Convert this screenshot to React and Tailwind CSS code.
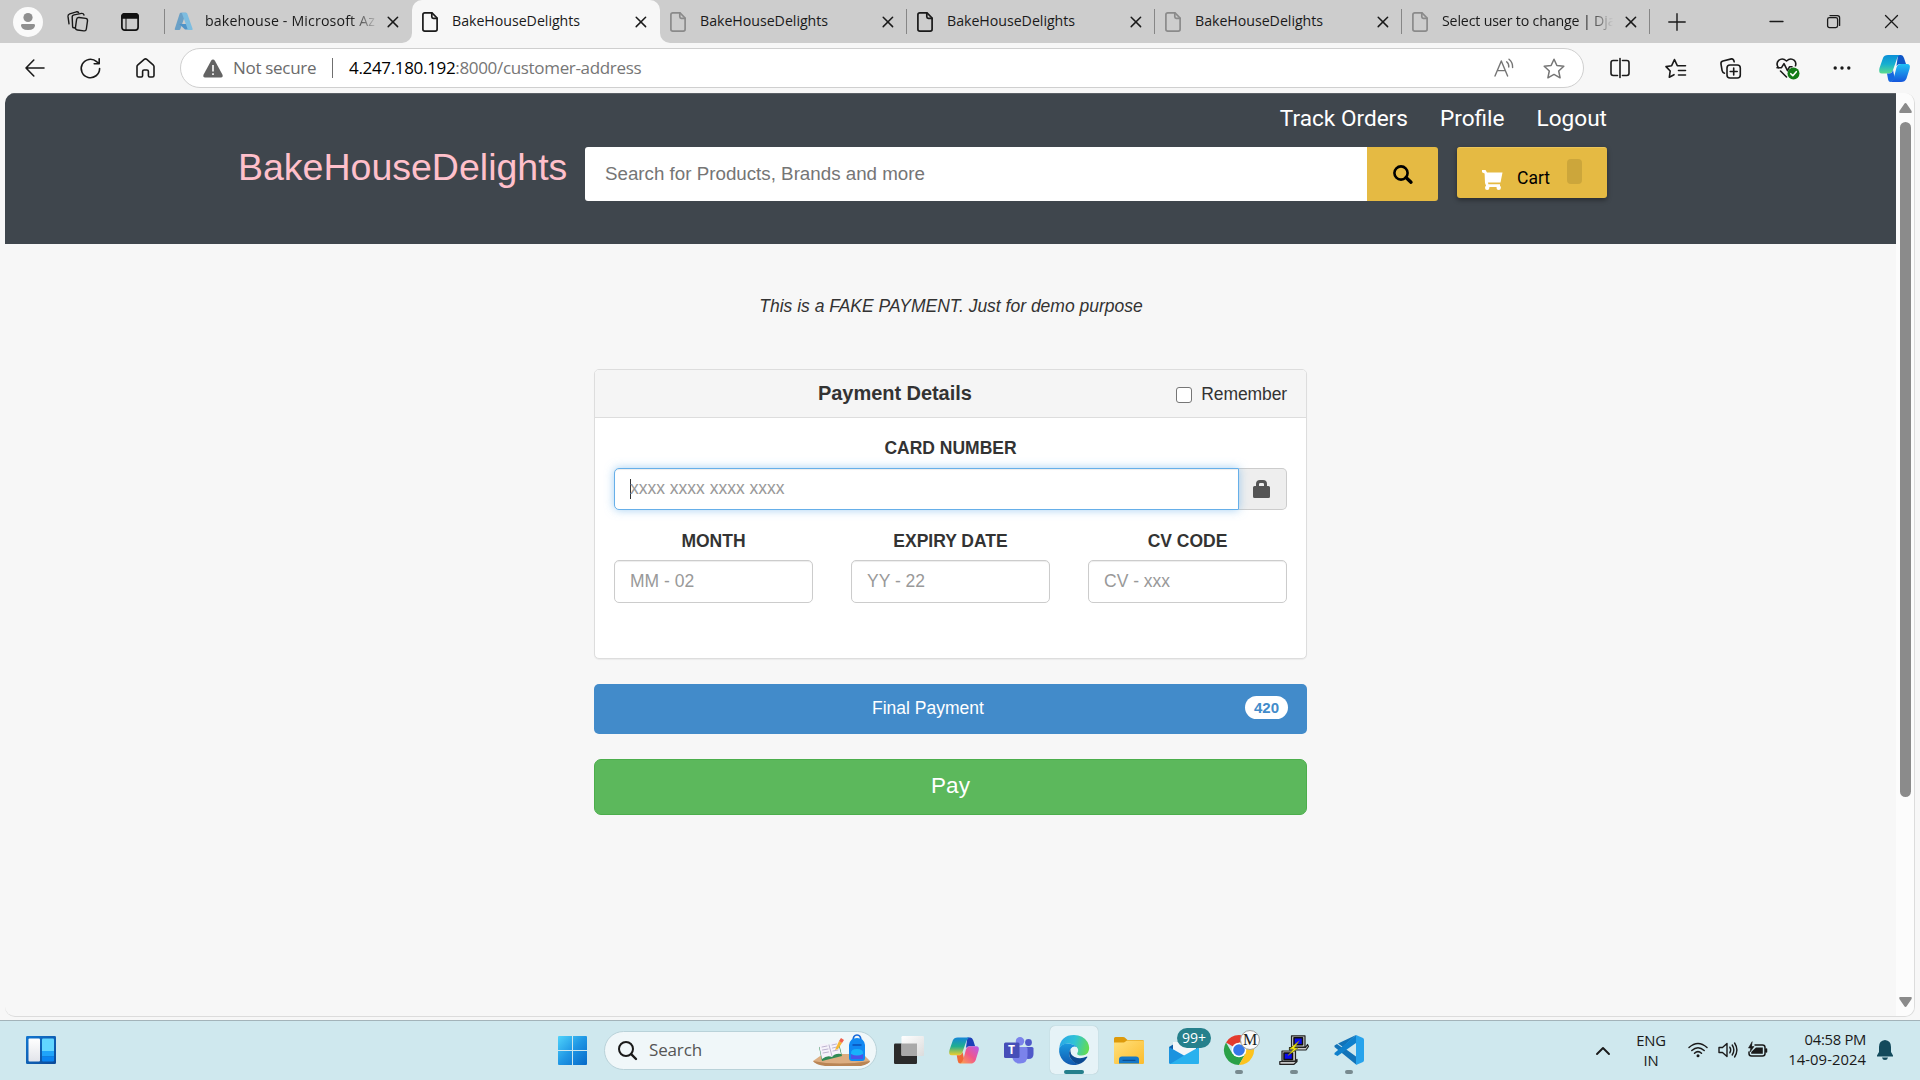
import React from "react";

const line = { fill: "none", stroke: "currentColor", strokeLinecap: "round", strokeLinejoin: "round" };

function Svg({ w, h, vb, className = "", children, sw = 1.5, ...rest }) {
  return (
    <svg width={w} height={h} viewBox={vb || `0 0 ${w} ${h}`} className={`block shrink-0 overflow-visible ${className}`} {...line} strokeWidth={sw} {...rest}>
      {children}
    </svg>
  );
}

const PageIcon = ({ className }) => (
  <Svg w={16} h={20} sw={1.7} className={className}>
    <path d="M2.8 .9H10L15.1 6V17.2Q15.1 19.1 13.2 19.1H2.8Q.9 19.1 .9 17.2V2.8Q.9 .9 2.8 .9Z" />
    <path d="M9.8 1V4.8Q9.8 6.3 11.3 6.3H15" />
  </Svg>
);

const CloseIcon = () => (
  <Svg w={12} h={12} sw={1.5} className="text-[#1a1a1a]"><path d="M1.2 1.2 10.6 10.6M10.6 1.2 1.2 10.6" /></Svg>
);

const AzureIcon = () => (
  <Svg w={20} h={19} stroke="none">
    <path d="M6.6 .8H12L6.3 17.2Q6 18 5.2 18H1.6Q.4 18 .8 16.8L5.7 1.5Q5.9 .8 6.6 .8Z" fill="#6aa0c6" />
    <path d="M5.2 12H14L15 17.5H11Z" fill="#4f93c8" />
    <path d="M7 .8H12.2Q13 .8 13.2 1.5L18.6 16.8Q19 18 17.8 18H12.6Q13.8 17.8 13.4 16.6L8 1.5Q7.7 .8 7 .8Z" fill="#7dbde0" />
  </Svg>
);

function Tab({ icon, title, width, fade, sep = true }) {
  return (
    <div className={`flex h-[43px] shrink-0 items-center ${width}`}>
      <div className="w-[10px] shrink-0" />
      {icon}
      <div className={`ml-[14px] w-[172px] whitespace-nowrap pb-[2px] text-[14.2px] leading-[22px] text-[#1a1a1a] ${fade ? "tracking-[-0.16px]" : "tracking-[-0.03px]"}`}>
        <span className={fade ? "bg-linear-to-r from-[#1a1a1a] from-83% to-[#cdcdcd] to-99% bg-clip-text text-transparent" : ""}>{title}</span>
      </div>
      <div className="ml-auto mr-[12px]"><CloseIcon /></div>
      {sep ? <div className="h-[25px] w-px bg-[#868686]" /> : <div className="w-px" />}
    </div>
  );
}

function TabStrip() {
  return (
    <div className="flex h-[43px] bg-[#cdcdcd]">
      <div className="h-[43px] w-[412px] shrink-0 bg-[#f7f7f7]">
        <div className="flex h-[43px] items-center rounded-br-[10px] bg-[#cdcdcd]">
          <Svg w={30} h={30} className="ml-[13px]" stroke="none">
            <circle cx="15" cy="15" r="15" fill="#fafafa" />
            <circle cx="15" cy="10.5" r="4.6" fill="#8f8f8f" />
            <path d="M8 18.3Q8 17 9.4 17H20.6Q22 17 22 18.3Q22 23 15 23Q8 23 8 18.3Z" fill="#8f8f8f" />
          </Svg>
          <Svg w={22} h={21} sw={1.4} className="ml-[24px] text-[#1a1a1a]">
            <rect x="9" y="6.8" width="11" height="12.6" rx="2.2" transform="rotate(8 14 13)" />
            <path d="M5.6 15.5 5.2 6.5Q5 4.3 7.1 3.9L14.6 2.4Q16.4 2.2 17 4" />
            <path d="M2 12.8 1 5.4Q.8 3.4 2.7 2.8L9.4 .8Q11 .5 11.6 1.6M5.8 16.5 8 17" />
          </Svg>
          <Svg w={18} h={18} sw={1.7} className="ml-[32px] text-[#111]">
            <rect x=".9" y=".9" width="16.2" height="16.2" rx="2.8" />
            <path d="M1 4.8V3.6Q1 .9 3.6 .9H14.4Q17 .9 17 3.6V4.8Z" fill="currentColor" />
            <path d="M5 5V17" strokeWidth="1" />
          </Svg>
          <div className="ml-[25px] h-[25px] w-px bg-[#868686]" />
          <div className="ml-[9px]"><AzureIcon /></div>
          <div className="ml-[11px] w-[172px] whitespace-nowrap pb-[2px] text-[14.2px] leading-[22px] tracking-[0.15px]">
            <span className="bg-linear-to-r from-[#1a1a1a] from-85% to-[#b5b5b5] bg-clip-text text-transparent">bakehouse - Microsoft Az</span>
          </div>
          <div className="ml-[10px]"><CloseIcon /></div>
        </div>
      </div>
      <div className="h-[43px] w-[248px] shrink-0 rounded-t-[10px] bg-[#f7f7f7]">
        <Tab width="w-[248px]" icon={<PageIcon className="text-[#1a1a1a]" />} title="BakeHouseDelights" sep={false} />
      </div>
      <div className="h-[43px] flex-1 bg-[#f7f7f7]">
        <div className="flex h-[43px] items-center rounded-bl-[10px] bg-[#cdcdcd]">
          <Tab width="w-[247px]" icon={<PageIcon className="text-[#8a8a8a]" />} title="BakeHouseDelights" />
          <Tab width="w-[248px]" icon={<PageIcon className="text-[#1a1a1a]" />} title="BakeHouseDelights" />
          <Tab width="w-[247px]" icon={<PageIcon className="text-[#8a8a8a]" />} title="BakeHouseDelights" />
          <Tab width="w-[248px]" icon={<PageIcon className="text-[#8a8a8a]" />} title="Select user to change | Dja" fade />
          <Svg w={18} h={18} sw={1.4} className="ml-[18px] text-[#1a1a1a]"><path d="M9 .8V17.2M.8 9H17.2" /></Svg>
          <Svg w={13} h={13} sw={1.3} className="ml-[84px] text-[#1a1a1a]"><path d="M0 6.5H13" /></Svg>
          <Svg w={13} h={13} sw={1.3} className="ml-[44px] text-[#1a1a1a]">
            <rect x=".6" y="2.6" width="10" height="10" rx="1.8" />
            <path d="M3 .6H10.4Q12.6 .6 12.6 2.8V10.4" />
          </Svg>
          <Svg w={13} h={13} sw={1.3} className="ml-[45px] text-[#1a1a1a]"><path d="M.5 .5 12.5 12.5M12.5 .5 .5 12.5" /></Svg>
        </div>
      </div>
    </div>
  );
}

const CopilotSmall = () => (
  <Svg w={31} h={27} vb="0 0 31 27" stroke="none">
    <defs>
      <linearGradient id="cpa" x1="0" y1="0" x2="0" y2="1"><stop offset="0" stopColor="#0a8fd8" /><stop offset=".5" stopColor="#18b0cf" /><stop offset="1" stopColor="#5ddc8c" /></linearGradient>
      <linearGradient id="cpb" x1="0" y1="0" x2="0" y2="1"><stop offset="0" stopColor="#20c0f5" /><stop offset="1" stopColor="#1556dc" /></linearGradient>
    </defs>
    <path d="M19 0H22Q24 0 25 3L27 9H21Q19 9 17.500 11Z" fill="#1057c8" />
    <path d="M9 0H21Q18.500 1 17.500 5L14 15Q13 18.500 9 18.500H3Q-1 18.500 .5 13L4 3Q5 0 9 0Z" fill="url(#cpa)" />
    <path d="M8 18.500H10Q13 18.500 14 15L15.500 22Q15 26 11.500 27Q9.500 27 9 24Z" fill="#1668e0" />
    <path d="M22 27H11.500Q14 26 15 22L17.500 12.500Q18.500 9 22 9H28Q32 9 30.500 14L27.500 23.500Q26 27 22 27Z" fill="url(#cpb)" />
  </Svg>
);

function Toolbar() {
  return (
    <div className="flex h-[50px] items-center bg-[#f7f7f7] text-[#1a1a1a]">
      <Svg w={20} h={18} sw={1.6} className="ml-[25px]"><path d="M19 9H1M8.800 1 1 9l7.800 8" /></Svg>
      <Svg w={21} h={21} sw={1.600} className="ml-[35px]"><path d="M19.600 10.500A9.200 9.200 0 1 1 16.600 3.700L19 5.600M19.200 .8V5.800H14.200" /></Svg>
      <Svg w={19} h={20} sw={1.600} className="ml-[35px]">
        <path d="M1 8.600Q1 7.600 1.900 6.800L8.200 1.400Q9.500 .4 10.800 1.400L17.100 6.800Q18 7.600 18 8.600V17.400Q18 19 16.400 19H13.600Q12.400 19 12.400 17.800V13.500Q12.400 12 10.900 12H8.100Q6.600 12 6.600 13.500V17.800Q6.600 19 5.400 19H2.600Q1 19 1 17.400Z" />
      </Svg>
      <div className="ml-[25px] flex h-[40px] w-[1404px] items-center rounded-full border border-[#cfcfcf] bg-white">
        <Svg w={20} h={19} className="ml-[22px]" stroke="none">
          <path d="M10 .5Q11.200 .5 11.900 1.700L19.500 15.800Q20.300 18.300 18 18.500H2Q-.3 18.300 .5 15.800L8.100 1.700Q8.800 .5 10 .5Z" fill="#636363" />
          <path d="M9.200 6H10.800V12.500H9.200ZM9.200 14.300H10.800V16H9.200Z" fill="#fff" />
        </Svg>
        <div className="ml-[10px] w-[99px] whitespace-nowrap text-[17px] tracking-[-0.3px] text-[#6b6b6b]">Not secure</div>
        <div className="h-[20px] w-px bg-[#6f6f6f]" />
        <div className="ml-[16px] whitespace-nowrap text-[17px] tracking-[-0.33px] text-[#767676]"><span className="text-black">4.247.180.192</span>:8000/customer-address</div>
        <div className="ml-auto mr-[18px] flex items-center gap-[28px] text-[#757575]">
          <Svg w={21} h={20} sw={1.400}>
            <path d="M1 18 7.300 3 13.600 18M3.400 12.600H11.200M12.600 3.800Q15 5.600 14.800 9M15 1.200Q18.800 4.300 18.600 9.500" />
          </Svg>
          <Svg w={22} h={21} sw={1.500}><path d="M11 1.200 13.900 7.500 20.800 8.300 15.700 13 17.100 19.800 11 16.400 4.900 19.800 6.300 13 1.200 8.300 8.100 7.500Z" /></Svg>
        </div>
      </div>
      <Svg w={20} h={20} sw={1.600} className="ml-[26px]">
        <path d="M7.500 2.500H3.200Q1 2.500 1 4.700V15.300Q1 17.500 3.200 17.500H7.500M12.500 2.500H16.800Q19 2.500 19 4.700V15.300Q19 17.500 16.800 17.500H12.500M10 .6V19.400" />
      </Svg>
      <Svg w={21} h={21} sw={1.600} className="ml-[35px]">
        <path d="M15.500 7.700H12.300L9.500 1.600 6.700 7.700 1 8.600 5.200 13 4.300 19.300 9 16.700M14.500 7.700H20.500M13.500 12.500H20.500M13.500 17H20.500" />
      </Svg>
      <Svg w={21} h={21} sw={1.600} className="ml-[34px]">
        <rect x="7" y="7" width="13.300" height="13" rx="3" />
        <path d="M13.700 10V17M10.200 13.500H17.200M4.500 15.200Q2.600 14.800 2.100 12.600L1 6Q.6 3.600 3 3L11.400 .9Q13.600 .6 14.200 3.800" />
      </Svg>
      <Svg w={24} h={21} sw={1.600} className="ml-[35px]">
        <path d="M2.600 10Q-.6 5.500 2.700 2.400Q6.500-.6 10.500 3Q14.500-.6 18.300 2.400Q20.500 4.600 19.500 7.800M4.500 13 10.500 19M1 9.700H5.500L8 5.700 11.500 12.700 13.500 8.800H16" />
        <circle cx="17.500" cy="15.500" r="6" fill="#137c17" stroke="none" />
        <path d="M14.800 15.700 16.800 17.700 20.300 13.700" stroke="#fff" />
      </Svg>
      <Svg w={18} h={6} className="ml-[33px]" stroke="none" fill="#1a1a1a"><circle cx="2.200" cy="3" r="1.700" /><circle cx="9" cy="3" r="1.700" /><circle cx="15.800" cy="3" r="1.700" /></Svg>
      <div className="ml-[28px]"><CopilotSmall /></div>
    </div>
  );
}

function SiteHeader() {
  return (
    <header className="h-[151px] border-t border-[#5b6066] bg-[#3f464d]">
      <div className="ml-[233px] flex w-[1369px] flex-col">
        <nav className="mt-[9px] flex h-[32px] items-center justify-end gap-[32px] font-[Roboto] text-[22.6px] leading-[32px] text-white">
          <span>Track Orders</span><span>Profile</span><span>Logout</span>
        </nav>
        <div className="mt-[12px] flex items-start">
          <div className="-mt-[3px] w-[347px] whitespace-nowrap text-[37.5px] leading-[46px] text-[#ffc0cb]">BakeHouseDelights</div>
          <div className="flex h-[54px] w-[782px] items-center rounded-l-[3px] bg-white pl-[20px] text-[18.75px] text-[#757575]">Search for Products, Brands and more</div>
          <div className="flex h-[54px] w-[71px] items-center justify-center rounded-r-[3px] bg-[#e5ba43]">
            <Svg w={20} h={19} sw={2.600} className="text-black"><circle cx="8" cy="8" r="6.600" /><path d="M13 12.600 18 17.200" strokeWidth="3.400" /></Svg>
          </div>
          <div className="ml-[19px] flex h-[51px] w-[150px] rounded-[3px] border-t border-[#edc65a] bg-[#e5ba43] shadow-[0_2px_5px_rgba(0,0,0,0.4)]">
            <Svg w={21} h={20} className="ml-[25px] mt-[22px]" stroke="none" fill="#fff">
              <path d="M0 0H3.500L5 2.500H20.500L18.500 12.500H6L6.400 14.200H18V17H4.500L3 13 2.600 3.600 0 2.200Z" />
              <circle cx="5.200" cy="17.700" r="2.200" /><circle cx="16.700" cy="17.700" r="2.200" />
            </Svg>
            <div className="ml-[14px] mt-[19px] w-[50px] font-[Roboto] text-[17.5px] leading-[22px] text-black">Cart</div>
            <div className="mt-[11px] h-[25px] w-[15px] rounded-[4px] bg-[#cca63b]" />
          </div>
        </div>
      </div>
    </header>
  );
}

function Field({ label, hint }) {
  return (
    <div className="w-[199px]">
      <div className="text-center font-bold leading-[25px]">{label}</div>
      <div className="mt-[6px] flex h-[43px] items-center rounded-[5px] border border-[#ccc] bg-white pl-[15px] pb-[1px] text-[#999] shadow-[inset_0_1px_1px_rgba(0,0,0,0.075)]">{hint}</div>
    </div>
  );
}

function Payment() {
  return (
    <main className="ml-[589px] w-[713px] text-[17.5px] leading-[25px] text-[#333]">
      <p className="mt-[50px] pl-px text-center italic">This is a FAKE PAYMENT. Just for demo purpose</p>
      <section className="mt-[50px] h-[290px] rounded-[5px] border border-[#ddd] bg-white shadow-[0_1px_1px_rgba(0,0,0,0.05)]">
        <div className="flex h-[48px] items-center rounded-t-[4px] border-b border-[#ddd] bg-[#f5f5f5] pr-[19px]">
          <h3 className="ml-[223px] pb-[2px] text-[20px] font-bold leading-[22px] tracking-[-0.05px]">Payment Details</h3>
          <div className="ml-auto mr-[9px] mt-[3px] size-[16px] rounded-[3px] border border-[#767676] bg-white" />
          <span className="pt-[2px] tracking-[-0.1px]">Remember</span>
        </div>
        <div className="px-[19px] pt-[18px]">
          <div className="text-center font-bold leading-[25px]">CARD NUMBER</div>
          <div className="mt-[7px] flex">
            <div className="z-10 flex h-[42px] w-[625px] items-center rounded-l-[5px] border border-[#66afe9] bg-white pl-[15px] text-[#999] shadow-[inset_0_1px_1px_rgba(0,0,0,0.075),0_0_10px_rgba(102,175,233,0.6)]">
              <span className="h-[20px] w-px bg-[#333]" /><span className="-ml-px pb-[2px]">xxxx xxxx xxxx xxxx</span>
            </div>
            <div className="flex h-[42px] w-[48px] items-center rounded-r-[5px] border border-l-0 border-[#ccc] bg-[#eee] pl-[14px]">
              <Svg w={17} h={18} stroke="none" fill="#555">
                <path fillRule="evenodd" d="M1.500 6H3V4Q3 0 7 0H10Q14 0 14 4V6H15.500Q17 6 17 7.500V16.500Q17 18 15.500 18H1.500Q0 18 0 16.500V7.500Q0 6 1.500 6ZM6 6H11V4.200Q11 2.900 9.800 2.900H7.200Q6 2.900 6 4.200Z" />
              </Svg>
            </div>
          </div>
          <div className="mt-[19px] flex justify-between">
            <Field label="MONTH" hint="MM - 02" />
            <Field label="EXPIRY DATE" hint="YY - 22" />
            <Field label="CV CODE" hint="CV - xxx" />
          </div>
        </div>
      </section>
      <div className="mt-[25px] flex h-[50px] items-center rounded-[5px] bg-[#428bca] pb-[3px] pr-[19px] text-white">
        <span className="ml-[278px] pt-[2px]">Final Payment</span>
        <span className="ml-auto flex h-[23px] w-[43px] items-center justify-center rounded-full bg-white text-[15px] font-bold leading-[15px] text-[#428bca]">420</span>
      </div>
      <div className="mt-[25px] flex h-[56px] items-center justify-center rounded-[7px] border border-[#4cae4c] bg-[#5cb85c] pb-[3px] text-[22.5px] text-white">Pay</div>
    </main>
  );
}

const WidgetsIcon = () => (
  <Svg w={30} h={28} stroke="none">
    <defs>
      <linearGradient id="wga" x1="0" y1="0" x2="1" y2="1"><stop offset="0" stopColor="#1276d0" /><stop offset="1" stopColor="#0b4a98" /></linearGradient>
      <linearGradient id="wgb" x1="0" y1="0" x2="0" y2="1"><stop offset="0" stopColor="#fff" /><stop offset="1" stopColor="#e2e4ea" /></linearGradient>
    </defs>
    <rect width="30" height="28" rx="1.200" fill="url(#wga)" />
    <rect x="2.500" y="2.500" width="11.500" height="23" rx="1" fill="url(#wgb)" />
    <path d="M16 3.500Q16 2.500 17 2.500H27Q28 2.500 28 3.500V15H16Z" fill="#62d6ff" />
    <rect x="16" y="15" width="12" height="5.500" fill="#1fa4fa" />
    <path d="M16 20.500H28V24.500Q28 25.500 27 25.500H17Q16 25.500 16 24.500Z" fill="#0a84f0" />
  </Svg>
);

const WindowsIcon = () => (
  <Svg w={29} h={29} stroke="none">
    <defs><linearGradient id="win" x1="0" y1="0" x2="1" y2="1"><stop offset="0" stopColor="#4fd3fb" /><stop offset=".5" stopColor="#1f96e4" /><stop offset="1" stopColor="#0569c8" /></linearGradient></defs>
    <path fill="url(#win)" d="M1 0H14V14H0V1Q0 0 1 0ZM15 0H28Q29 0 29 1V14H15ZM0 15H14V29H1Q0 29 0 28ZM15 15H29V28Q29 29 28 29H15Z" />
  </Svg>
);

const StudyArt = () => (
  <Svg w={58} h={32} stroke="none">
    <path d="M0 26 10 19H50L57 26Q57 28 50 30H10Q2 29 0 26Z" fill="#dcae82" /><path d="M0 26Q25 31 57 26Q56 29 48 31H12Q3 30 0 26Z" fill="#b98555" />
    <path d="M6 12 26 8 29 21 9 26Z" fill="#2f8a55" /><path d="M6 10Q12 7 16 10Q20 5 25 7L28 19Q22 18 19 22Q14 20 9 24Z" fill="#f5f2fa" />
    <path d="M16 10 19 21M9 12 14 11M9.500 15 15 14M10 18 15.500 17M19 10 23.500 9M19.500 13 24 12M20 16 25 15" stroke="#b5abc9" strokeWidth=".9" />
    <path d="M22 15 26 6 29 8 25 14Z" fill="#f7b733" /><path d="M26 6 28 3 31 5 29 8Z" fill="#f0604d" />
    <path d="M40 6Q40 0 44 0Q48 0 48 6" fill="none" stroke="#1466d8" strokeWidth="1.600" />
    <path d="M36 10Q37 3 44 3Q51 3 52 10V23Q52 26 49 26H39Q36 26 36 23Z" fill="#1188f2" />
    <path d="M38 18Q38 14 44 14Q50 14 50 18V24H38Z" fill="#17b3fb" /><path d="M38 19Q44 22 50 19V24H38Z" fill="#4a54e8" /><path d="M40 10H48" stroke="#0a4fb8" strokeWidth="1.500" />
  </Svg>
);

const TaskView = () => (
  <Svg w={30} h={28} stroke="none">
    <defs><linearGradient id="tv" x1="0" y1="0" x2="1" y2="1"><stop offset="0" stopColor="#fff" /><stop offset="1" stopColor="#dcdcdc" /></linearGradient></defs>
    <rect y="7.500" width="23" height="20.500" rx="1.200" fill="#2b2b2b" />
    <rect x="7.500" width="22.500" height="20" rx="1.200" fill="url(#tv)" /><path d="M7.500 7.500H23V20H8.500Q7.500 20 7.500 19Z" fill="#a9a9a9" />
  </Svg>
);

const CopilotColor = () => (
  <Svg w={30} h={27} vb="0 0 31 27" stroke="none">
    <defs>
      <linearGradient id="cca" x1="0" y1="0" x2="0" y2="1"><stop offset="0" stopColor="#1486d8" /><stop offset=".5" stopColor="#1fae8f" /><stop offset="1" stopColor="#f3cf2c" /></linearGradient>
      <linearGradient id="ccb" x1="1" y1="0" x2="0" y2="1"><stop offset="0" stopColor="#b45cf0" /><stop offset=".5" stopColor="#f0568c" /><stop offset="1" stopColor="#fca64a" /></linearGradient>
    </defs>
    <path d="M19 0H22Q24 0 25 3L27 9H21Q19 9 17.500 11Z" fill="#1b3fb8" />
    <path d="M9 0H21Q18.500 1 17.500 5L14 15Q13 18.500 9 18.500H3Q-1 18.500 .5 13L4 3Q5 0 9 0Z" fill="url(#cca)" />
    <path d="M8 18.500H10Q13 18.500 14 15L15.500 22Q15 26 11.500 27Q9.500 27 9 24Z" fill="#f06a35" />
    <path d="M22 27H11.500Q14 26 15 22L17.500 12.500Q18.500 9 22 9H28Q32 9 30.500 14L27.500 23.500Q26 27 22 27Z" fill="url(#ccb)" />
  </Svg>
);

const TeamsIcon = () => (
  <div className="relative">
    <Svg w={30} h={27} stroke="none">
      <circle cx="24.500" cy="5.500" r="3.400" fill="#5059c9" /><circle cx="16" cy="4.200" r="4.200" fill="#7b83eb" />
      <path d="M19 10H28Q29.500 10 29.500 11.500V17Q29.500 22 24.500 22Q20 22 19 18Z" fill="#5059c9" />
      <path d="M8 10H22Q23.500 10 23.500 11.500V18.500Q23.500 26.500 16 26.500Q9 26.500 8 19Z" fill="#7b83eb" />
      <rect y="5.500" width="15.500" height="15.500" rx="1.500" fill="#464eb8" />
    </Svg>
    <span className="absolute left-0 top-[5px] w-[15px] text-center text-[12px] font-bold leading-[16px] text-white">T</span>
  </div>
);

const EdgeIcon = () => (
  <Svg w={30} h={30} stroke="none">
    <defs>
      <linearGradient id="ea" x1="0" y1=".3" x2="1" y2=".5"><stop offset="0" stopColor="#2aa6e8" /><stop offset=".5" stopColor="#2fc3d6" /><stop offset="1" stopColor="#63dc52" /></linearGradient>
      <linearGradient id="eb" x1="0" y1="0" x2="0" y2="1"><stop offset="0" stopColor="#1b9ae0" /><stop offset="1" stopColor="#1159b0" /></linearGradient>
    </defs>
    <path d="M.2 13.500Q1.500 0 15 0Q24 0 28.500 7Q31.500 13 29 17.500Q27 20.500 22.500 20.500Q18 20.500 18.200 18.500Q19.800 16.500 19 14Q16.500 9 9 8.500Q2.500 9 .2 13.500Z" fill="url(#ea)" />
    <path d="M.2 13.500Q2.500 8.500 9 8.500Q15.500 9 18 12Q14 10.500 11.500 14Q8.500 19 12 24Q14.500 27.500 19.500 29.200Q11 32 4.500 26Q-.6 20.500 .2 13.500Z" fill="url(#eb)" />
    <path d="M11.500 14Q8.500 19 12 24Q14.500 28 19.500 29.200Q25 27.500 28.300 22.200Q28.600 21 27.300 21.700Q21.500 24.500 15.500 22Q10.500 19 11.500 14Z" fill="#0c4a92" />
  </Svg>
);

const FolderIcon = () => (
  <Svg w={30} h={27} stroke="none">
    <defs><linearGradient id="fo" x1="0" y1="0" x2="1" y2="1"><stop offset="0" stopColor="#ffe07c" /><stop offset="1" stopColor="#fcbc2c" /></linearGradient></defs>
    <path d="M0 1.500Q0 0 1.500 0H9Q10.500 0 11.300 1L13.500 3H28.500Q30 3 30 4.500V12H0Z" fill="#dd9a0b" />
    <path d="M0 5.500H10L13 3.500H28.800Q30 3.500 30 4.700V25.800Q30 27 28.800 27H1.200Q0 27 0 25.800Z" fill="url(#fo)" />
    <path d="M5 26.500V22.500Q5 19.500 8 19.500H22Q25 19.500 25 22.500V26.500Z" fill="#1478c8" /><path d="M9 23.300H21" stroke="#0b4f94" strokeWidth="1.200" />
  </Svg>
);

const MailIcon = () => (
  <div className="relative h-[28px]">
    <Svg w={30} h={28} stroke="none" className="mt-[1px]">
      <path d="M0 10 15 1 30 10V15H0Z" fill="#0f5da8" /><path d="M4 5H27V16L15 20 4 13Z" fill="#f4f6f8" />
      <path d="M0 10 30 27H1.500Q0 27 0 25.500Z" fill="#1b93df" /><path d="M30 10V25.500Q30 27 28.500 27H1L15 18.500Z" fill="#29b1ee" />
    </Svg>
    <span className="absolute -top-[8px] left-[8px] flex h-[20px] w-[34px] items-center justify-center rounded-full bg-[#26808c] text-[14px] leading-[20px] text-white">99+</span>
  </div>
);

const ChromeIcon = () => (
  <div className="relative">
    <Svg w={30} h={30} stroke="none">
      <path d="M15 15 2 7.500A15 15 0 0 1 28 7.500L15 7.500Z" fill="#e33b2e" />
      <path d="M2 7.500A15 15 0 0 0 15 30L21.500 18.700 15 15 8.500 18.700Z" fill="#2aa148" />
      <path d="M28 7.500A15 15 0 0 1 15 30L21.500 18.700V11.300L15 7.500Z" fill="#fcc31e" />
      <circle cx="15" cy="15" r="7.300" fill="#fff" /><circle cx="15" cy="15" r="5.800" fill="#3577e8" />
    </Svg>
    <span className="absolute -top-[5px] left-[16px] flex size-[20px] items-center justify-center rounded-full border border-[#a0a0a0] bg-[#fafafa] font-['Liberation_Serif'] text-[16px] leading-[16px] text-[#222]">M</span>
  </div>
);

const PuttyIcon = () => (
  <Svg w={30} h={30} stroke="none">
    <path d="M12.500 .8H26V12H12.500ZM10.500 15V12.500H26.500L28.500 9.500 29.500 11.500 27 15Z" fill="#c9c9c9" stroke="#222" strokeWidth="1.200" /><rect x="15" y="2.800" width="8.500" height="7" fill="#0a0af0" stroke="#111" />
    <path d="M3 16H16.500V26H3ZM.8 29.300V26.500H16L18 24.500V26.500L15 29.300Z" fill="#c9c9c9" stroke="#222" strokeWidth="1.200" /><rect x="5" y="18" width="8.500" height="6.500" fill="#0a0af0" stroke="#111" />
    <path d="M20 6 10.500 14H14.500L9 20.500 19 13H15.500Z" fill="#fbf114" stroke="#8a8205" strokeWidth=".6" />
  </Svg>
);

const CodeIcon = () => (
  <Svg w={30} h={30} stroke="none">
    <path d="M22 0 8 12.500 3 9 .5 10.500V12L22 29.500V21.500L4 8.500Z" fill="#1273b8" />
    <path d="M22 0V8L3.500 21 .5 19.500V18Z" fill="#0f80cc" />
    <path d="M22 0 29 3Q30 3.500 30 5V25Q30 26.500 29 27L22 30Z" fill="#27a3ec" />
  </Svg>
);

function Slot({ children, bar, active }) {
  return (
    <div className={`relative flex h-[48px] w-[48px] items-center justify-center rounded-[5px] ${active ? "bg-[#e6f3f7] shadow-[0_0_1px_rgba(0,0,0,0.25)]" : ""}`}>
      {children}
      {bar && <div className={`absolute bottom-0 h-[4px] rounded-full ${active ? "w-[20px] bg-[#26808c]" : "w-[8px] bg-[#788a8f]"}`} />}
    </div>
  );
}

function Taskbar() {
  return (
    <footer className="flex h-[60px] items-center border-t border-[#a3b3b9] bg-[#cfe8ee] text-[#1a1a1a]">
      <div className="ml-[26px] w-[532px] pb-[2px]"><WidgetsIcon /></div>
      <WindowsIcon />
      <div className="mb-px ml-[17px] flex h-[39px] w-[273px] items-center rounded-full border border-[#b9d2d9] bg-[#f0f7f9]">
        <Svg w={19} h={19} sw={2} className="ml-[13px]"><circle cx="8" cy="8" r="7" /><path d="M13.200 13.200 18 18" strokeWidth="2.400" /></Svg>
        <span className="ml-[12px] text-[17px] tracking-[-0.15px] text-[#555]">Search</span>
        <div className="ml-auto mr-[5px] mt-px"><StudyArt /></div>
      </div>
      <div className="mb-px ml-[8px] flex items-center gap-[7px]">
        <Slot><TaskView /></Slot>
        <Slot><CopilotColor /></Slot>
        <Slot><TeamsIcon /></Slot>
        <Slot bar active><EdgeIcon /></Slot>
        <Slot><FolderIcon /></Slot>
        <Slot><MailIcon /></Slot>
        <Slot bar><ChromeIcon /></Slot>
        <Slot bar><PuttyIcon /></Slot>
        <Slot bar><CodeIcon /></Slot>
      </div>
      <Svg w={14} h={8} sw={1.900} className="ml-auto"><path d="M1 7 7 1 13 7" /></Svg>
      <div className="ml-[22px] w-[38px] pb-[2px] text-center text-[14.800px] leading-[20px] tracking-[-0.2px]">ENG<br />IN</div>
      <Svg w={20} h={16} sw={1.500} className="mb-[2px] ml-[18px]">
        <path d="M1 5.500Q10-2.500 19 5.500M3.800 8.500Q10 3 16.200 8.500M6.500 11.300Q10 8 13.500 11.300" /><circle cx="10" cy="13.800" r="1.500" fill="currentColor" stroke="none" />
      </Svg>
      <Svg w={20} h={16} sw={1.400} className="mb-[2px] ml-[10px]"><path d="M1 5.500H4.500L9 1.500V14.500L4.500 10.500H1ZM11.800 5.200Q13.600 8 11.800 10.800M14.200 3Q17.500 8 14.200 13M16.600 1Q21.200 8 16.600 15" /></Svg>
      <Svg w={20} h={16} sw={1.500} className="mb-[2px] ml-[10px]">
        <path d="M7 3H14.500Q17 3 17 5.500V11.500Q17 14 14.500 14H3.500Q1 14 1 11.500V10M18.500 7V10" /><path d="M8 5.500H14.800V11.800H3.200V10Z" fill="currentColor" stroke="none" /><path d="M4 0 .5 6H2.800L2 10 6 4.500H3.800Z" fill="currentColor" strokeWidth=".6" />
      </Svg>
      <div className="ml-[10px] w-[88px] whitespace-nowrap pb-[3px] text-right text-[14.800px] leading-[20px]"><span className="tracking-[-0.3px]">04:58 PM</span><br /><span className="tracking-[0.05px]">14-09-2024</span></div>
      <Svg w={16} h={20} className="mb-px ml-[11px] mr-[27px]" stroke="none" fill="#134a5c"><path d="M8 0Q14 .5 14 7V12L16 15.500V16.500H0V15.500L2 12V7Q2 .5 8 0ZM5 17.500H11Q10.500 20 8 20Q5.500 20 5 17.500Z" /></Svg>
    </footer>
  );
}

export default function App() {
  return (
    <div className="flex h-[1080px] w-[1920px] flex-col overflow-hidden bg-[#f7f7f7] font-['Open_Sans',sans-serif]">
      <TabStrip />
      <Toolbar />
      <div className="ml-[5px] mr-[5px] flex h-[924px] overflow-hidden rounded-[10px] border-b border-r border-[#dcdcdc] bg-[#f7f7f7] font-['Liberation_Sans',sans-serif]">
        <div className="w-[1891px]">
          <SiteHeader />
          <Payment />
        </div>
        <div className="flex flex-1 flex-col items-center bg-[#fcfcfc]">
          <Svg w={13} h={10} className="mt-[10px]" stroke="none" fill="#8b8b8b"><path d="M6.500 0Q7.200 0 7.800 1L12.600 8Q13.300 10 12 10H1Q-.3 10 .4 8L5.200 1Q5.800 0 6.500 0Z" /></Svg>
          <div className="mt-[9px] h-[675px] w-[11px] rounded-full bg-[#8b8b8b]" />
          <Svg w={13} h={10} className="mb-[9px] mt-auto" stroke="none" fill="#8b8b8b"><path d="M6.500 10Q7.200 10 7.800 9L12.600 2Q13.300 0 12 0H1Q-.3 0 .4 2L5.200 9Q5.800 10 6.500 10Z" /></Svg>
        </div>
      </div>
      <div className="h-[3px]" />
      <Taskbar />
    </div>
  );
}
